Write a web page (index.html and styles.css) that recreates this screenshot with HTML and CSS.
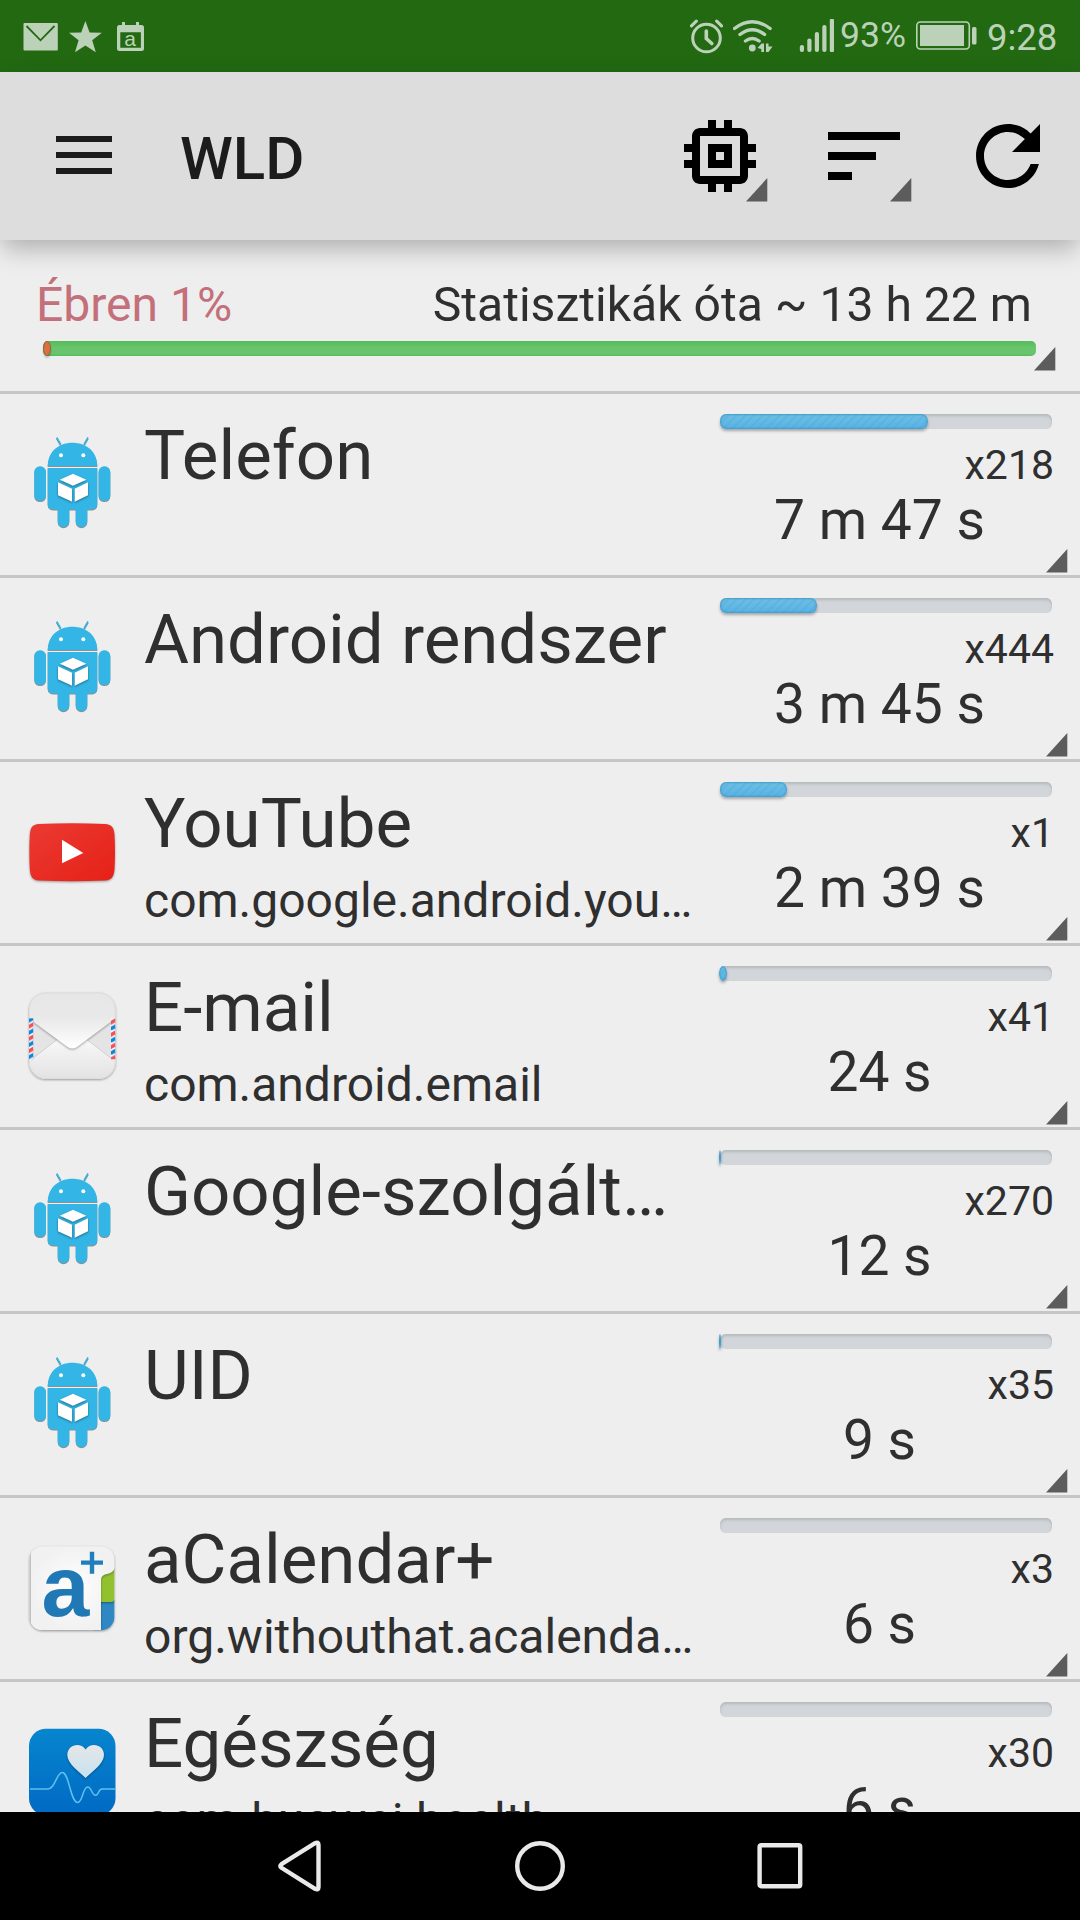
FILE: index.html
```html
<!DOCTYPE html>
<html lang="hu">
<head>
  <meta charset="UTF-8">
  <meta name="viewport" content="width=device-width, initial-scale=1.0">
  <title>WLD</title>
  <link rel="stylesheet" href="styles.css">
</head>
<body>
  <!-- shared shapes -->
  <svg class="defs" width="0" height="0">
    <symbol id="android" viewBox="0 0 96 96">
      <g class="droid">
        <path d="M32.7 1.5l4 7M64 1.5l-4 7" stroke="#33b5e5" stroke-width="1.6"/>
        <path d="M23.7 30C24 15 35 6.7 48.5 6.7S73 15 73.3 30z"/>
        <path d="M23.7 32h49.6v36.5a5 5 0 0 1-5 5h-39.6a5 5 0 0 1-5-5z"/>
        <rect x="10.3" y="30.3" width="11.7" height="34.7" rx="5.5"/>
        <rect x="74.6" y="30.3" width="11.7" height="34.7" rx="5.5"/>
        <path d="M33.7 72h11.6v13.5a5.8 5.8 0 0 1-11.6 0zM51.7 72h11.6v13.5a5.8 5.8 0 0 1-11.6 0z"/>
      </g>
      <circle cx="37" cy="19.3" r="2" fill="#fff"/>
      <circle cx="59.3" cy="19.3" r="2" fill="#fff"/>
      <path class="cube" d="M49 37.7l13.4 6L49 49.7l-13.2-6zM34 46.3l14 6.4v13l-14-6.4zM64 46.3l-13.3 6.4v13L64 59.3z"/>
    </symbol>
    <symbol id="corner" viewBox="0 0 22 24">
      <path d="M0 23.5L21.3 0v23.5z" fill="#5c5c5c"/>
    </symbol>
  </svg>

  <div class="status-bar">
    <svg class="mail" viewBox="23 0 35 72" width="35" height="72">
      <rect x="23.5" y="23" width="34.3" height="27.5" rx="1"/>
      <path d="M26.5 26l14 14.3 14-14.3" fill="none" stroke="#226912" stroke-width="1.8"/>
    </svg>
    <svg class="star" viewBox="69 0 33 72" width="33" height="72">
      <path d="M85.4 21l4.2 11.4 12.2.4-9.6 7.5 3.6 11.9-10.4-6.8L75 52.2l3.6-11.9-9.6-7.5 12.2-.4z"/>
    </svg>
    <svg class="cal" viewBox="117 0 27 72" width="27" height="72">
      <path fill-rule="evenodd" d="M122 22h3v3h11v-3h3v3h2.5a2.5 2.5 0 0 1 2.5 2.5v21a2.5 2.5 0 0 1-2.5 2.5h-22a2.5 2.5 0 0 1-2.5-2.5v-21a2.5 2.5 0 0 1 2.5-2.5h2.5zM120.3 32.2v15.6h20.6V32.2z"/>
      <text x="124.3" y="46" font-size="21" textLength="12.5">a</text>
    </svg>

    <svg class="alarm" viewBox="690 0 33 72" width="33" height="72">
      <g fill="none" stroke="#bcd2b8" stroke-linecap="round">
        <circle cx="706.5" cy="38" r="13.8" stroke-width="3"/>
        <path d="M706.3 31v7.5l5.5 5" stroke-width="3.6"/>
        <path d="M691.5 25.8l4.8-4.6M721.5 25.8l-4.8-4.6" stroke-width="3.2"/>
      </g>
    </svg>
    <svg class="wifi" viewBox="733 0 40 72" width="40" height="72">
      <g fill="none" stroke="#bcd2b8" stroke-width="3.4" stroke-linecap="round">
        <path d="M734.5 28.5q17.8-13.5 35.6 0M740 34.5q12.3-9.5 24.6 0M745.5 41q6.800-5 13.600 0"/>
      </g>
      <circle cx="752.3" cy="48" r="3.4"/>
      <path d="M757.5 48l4-4.5h2.5v8.5h-2.700v-3zM766 43.500h2.500v3h4l-4 5.500H766z"/>
    </svg>
    <svg class="signal" viewBox="799 0 36 72" width="36" height="72">
      <rect x="799.8" y="45" width="4.2" height="7" rx="2"/>
      <rect x="807.3" y="38.5" width="4.2" height="13.5" rx="2"/>
      <rect x="814.8" y="32" width="4.2" height="20" rx="2"/>
      <rect x="822.3" y="25" width="4.2" height="27" rx="2"/>
      <rect x="829.8" y="19" width="4.2" height="33" rx="1"/>
    </svg>
    <span class="percent">93%</span>
    <svg class="battery" viewBox="916 0 61 72" width="61" height="72">
      <rect x="916.8" y="22" width="52.5" height="27" rx="3.5" fill="none" stroke="#bcd2b8" stroke-width="1.6"/>
      <rect x="920" y="25" width="44" height="21"/>
      <rect x="972" y="27" width="4.5" height="17.5" rx="1.5"/>
    </svg>
    <span class="clock">9:28</span>
  </div>

  <header class="app-bar">
    <svg class="menu" viewBox="0 0 56 38" width="56" height="38"><path d="M0 0h56v6H0zM0 16h56v6H0zM0 32h56v6H0z"/></svg>
    <h1>WLD</h1>
    <div class="actions">
      <div class="action">
        <svg viewBox="0 0 24 24"><path d="M15 9H9v6h6V9zm-2 4h-2v-2h2v2zm8-2V9h-2V7c0-1.100-.9-2-2-2h-2V3h-2v2h-2V3H9v2H7c-1.100 0-2 .9-2 2v2H3v2h2v2H3v2h2v2c0 1.100.9 2 2 2h2v2h2v-2h2v2h2v-2h2c1.100 0 2-.9 2-2v-2h2v-2h-2v-2h2zm-4 6H7V7h10v10z"/></svg>
        <svg class="corner"><use href="#corner"/></svg>
      </div>
      <div class="action">
        <svg viewBox="0 0 24 24"><path d="M3 18h6v-2H3v2zM3 6v2h18V6H3zm0 7h12v-2H3v2z"/></svg>
        <svg class="corner"><use href="#corner"/></svg>
      </div>
      <div class="action">
        <svg viewBox="0 0 24 24"><path d="M17.65 6.35C16.2 4.9 14.21 4 12 4c-4.42 0-7.99 3.58-7.99 8s3.57 8 7.99 8c3.73 0 6.84-2.55 7.73-6h-2.08c-.82 2.33-3.04 4-5.65 4-3.31 0-6-2.69-6-6s2.69-6 6-6c1.66 0 3.14.69 4.22 1.78L13 11h7V4l-2.35 2.35z"/></svg>
      </div>
    </div>
  </header>

  <main>
    <section class="summary">
      <div class="summary-text">
        <span class="awake">Ébren 1%</span>
        <span class="since">Statisztikák óta ~ 13 h 22 m</span>
      </div>
      <div class="total"><div class="total-awake" style="width:0.8%"></div></div>
      <svg class="corner"><use href="#corner"/></svg>
    </section>

    <div class="row">
      <svg class="icon"><use href="#android"/></svg>
      <div class="info"><div class="name">Telefon</div></div>
      <div class="usage">
        <div class="bar"><div class="fill" style="width:62.7%"></div></div>
        <div class="count">x218</div>
        <div class="time">7 m 47 s</div>
      </div>
      <svg class="corner"><use href="#corner"/></svg>
    </div>

    <div class="row">
      <svg class="icon"><use href="#android"/></svg>
      <div class="info"><div class="name">Android rendszer</div></div>
      <div class="usage">
        <div class="bar"><div class="fill" style="width:29.3%"></div></div>
        <div class="count">x444</div>
        <div class="time">3 m 45 s</div>
      </div>
      <svg class="corner"><use href="#corner"/></svg>
    </div>

    <div class="row">
      <svg class="icon" viewBox="0 0 96 96">
        <defs><linearGradient id="yt" x2="1" y2="1"><stop stop-color="#ea3a33"/><stop offset="1" stop-color="#e62117"/></linearGradient></defs>
        <path class="lift" fill="url(#yt)" d="M15 20Q48 18.6 81 20C88 20.5 90 24 90.5 31Q91.5 48 90.5 65C90 72 88 76 81 76.5Q48 77.8 15 76.5C8 76 6.3 72 5.8 65Q4.9 48 5.8 31C6.3 24 8 20.5 15 20z"/>
        <path d="M38 35.7L59.3 49 38 59.3z" fill="#fff"/>
      </svg>
      <div class="info"><div class="name">YouTube</div><div class="package">com.google.android.you…</div></div>
      <div class="usage">
        <div class="bar"><div class="fill" style="width:20.3%"></div></div>
        <div class="count">x1</div>
        <div class="time">2 m 39 s</div>
      </div>
      <svg class="corner"><use href="#corner"/></svg>
    </div>

    <div class="row">
      <svg class="icon" viewBox="0 0 96 96">
        <defs>
          <linearGradient id="flap" x2="0" y2="1"><stop stop-color="#e6e6e6"/><stop offset=".5" stop-color="#e9e9e9"/><stop offset="1" stop-color="#fff"/></linearGradient>
          <linearGradient id="pocket" x2="0" y2="1"><stop stop-color="#f8f8f8"/><stop offset="1" stop-color="#e2e2e2"/></linearGradient>
          <clipPath id="envelope"><rect x="5" y="4.5" width="86.5" height="86.5" rx="17"/></clipPath>
          <pattern id="post-l" width="4.5" height="12.2" x="5" y="30" patternUnits="userSpaceOnUse">
            <path fill="#fff" d="M0 0h4.5v12.2H0z"/><path fill="#0c86d8" d="M0 .5l4.5-2.500v4.200L0 4.700zM0 12.700l4.500-2.500v4.200L0 16.900z"/><path fill="#f0525a" d="M0 6.600l4.500-2.500v4.200L0 10.800z"/>
          </pattern>
          <pattern id="post-r" width="4.500" height="12.200" x="87" y="30" patternUnits="userSpaceOnUse">
            <path fill="#fff" d="M0 0h4.500v12.200H0z"/><path fill="#f0525a" d="M0 2.500L4.500 0v4.200L0 6.700z"/><path fill="#0c86d8" d="M0 8.600l4.500-2.500v4.200L0 12.800z"/>
          </pattern>
        </defs>
        <rect class="lift" x="5" y="4.500" width="86.500" height="86.500" rx="17" fill="#e4e4e4"/>
        <g clip-path="url(#envelope)">
          <path d="M5 73l28-22h30l29 22v19H5z" fill="url(#pocket)"/>
          <path d="M9 70l24.500-18.700M87 70L62.500 51.300" stroke="#c4c4c4" stroke-width=".8"/>
          <path class="lift" d="M0 0h96v27L53 59q-4.700 3-9.400 0L0 27z" fill="url(#flap)"/>
        </g>
        <rect x="5.500" y="5" width="85.500" height="85.500" rx="16.500" fill="none" stroke="#dadada" stroke-width=".8"/>
        <rect x="5" y="30.300" width="4.300" height="41" fill="url(#post-l)"/>
        <rect x="87" y="30.300" width="4.300" height="41" fill="url(#post-r)"/>
      </svg>
      <div class="info"><div class="name">E-mail</div><div class="package">com.android.email</div></div>
      <div class="usage">
        <div class="bar"><div class="fill sliver" style="width:2.4%"></div></div>
        <div class="count">x41</div>
        <div class="time">24 s</div>
      </div>
      <svg class="corner"><use href="#corner"/></svg>
    </div>

    <div class="row">
      <svg class="icon"><use href="#android"/></svg>
      <div class="info"><div class="name">Google-szolgált…</div></div>
      <div class="usage">
        <div class="bar"><div class="fill sliver" style="width:0.6%"></div></div>
        <div class="count">x270</div>
        <div class="time">12 s</div>
      </div>
      <svg class="corner"><use href="#corner"/></svg>
    </div>

    <div class="row">
      <svg class="icon"><use href="#android"/></svg>
      <div class="info"><div class="name">UID</div></div>
      <div class="usage">
        <div class="bar"><div class="fill sliver" style="width:0.5%"></div></div>
        <div class="count">x35</div>
        <div class="time">9 s</div>
      </div>
      <svg class="corner"><use href="#corner"/></svg>
    </div>

    <div class="row">
      <svg class="icon" viewBox="0 0 96 96">
        <defs>
          <radialGradient id="page"><stop stop-color="#fff"/><stop offset="1" stop-color="#f1f1f1"/></radialGradient>
          <clipPath id="tile"><rect x="5.5" y="6.3" width="84.8" height="84" rx="13"/></clipPath>
        </defs>
        <rect class="lift" x="5.5" y="6.3" width="84.8" height="84" rx="13" fill="#ddd"/>
        <g clip-path="url(#tile)">
          <path d="M70 60h22v32H70z" fill="#2f88c4"/>
          <path class="lift" d="M70 28h22v28q-1 6-5 6H70z" fill="#92c130"/>
          <path class="lift" d="M7 6h84v22q-2 5-8 6-6 1-6 6v50H7z" fill="url(#page)"/>
        </g>
        <text class="cal-a" x="17.5" y="75.5">a</text>
        <path d="M65.8 11.7h4.4v8.8H79v4.3h-8.800v8.900h-4.400v-8.900H57v-4.300h8.800z" fill="#1f7fbd"/>
      </svg>
      <div class="info"><div class="name">aCalendar+</div><div class="package">org.withouthat.acalenda…</div></div>
      <div class="usage">
        <div class="bar"></div>
        <div class="count">x3</div>
        <div class="time">6 s</div>
      </div>
      <svg class="corner"><use href="#corner"/></svg>
    </div>

    <div class="row">
      <svg class="icon" viewBox="0 0 96 96">
        <defs>
          <linearGradient id="blue" x2="0" y2="1"><stop stop-color="#0785ce"/><stop offset="1" stop-color="#006ac4"/></linearGradient>
          <linearGradient id="heart" x2="0" y2="1"><stop stop-color="#e6e6e8"/><stop offset="1" stop-color="#c5e2f0"/></linearGradient>
        </defs>
        <rect x="5" y="4.7" width="86.5" height="86.5" rx="17" fill="url(#blue)"/>
        <path d="M6 65h17c9 0 9-16.5 15.3-16.5 7 0 8 30 15.4 30 5 0 5-15.5 10-15.5 4 0 4 8.3 7.7 8.3S74 65 78 65h13" fill="none" stroke="#5fc0ee" stroke-width="1.5"/>
        <path class="lift" d="M61.6 54C56 48 43.3 40 43.3 31c0-10.5 13-13.5 18.3-5.5 5.3-8 18.4-5 18.4 5.5 0 9-12.8 17-18.4 23z" fill="url(#heart)"/>
      </svg>
      <div class="info"><div class="name">Egészség</div><div class="package">com.huawei.health</div></div>
      <div class="usage">
        <div class="bar"></div>
        <div class="count">x30</div>
        <div class="time">6 s</div>
      </div>
    </div>
  </main>

  <nav class="nav-bar">
    <svg viewBox="0 0 52 52"><path d="M7.5 24.2L41 3.2q3.5-1.7 3.5 1.5v42.6q0 3.2-3.5 1.5L7.5 27.8q-2.4-1.8 0-3.6z"/></svg>
    <svg viewBox="0 0 52 52"><circle cx="26" cy="26" r="22.8"/></svg>
    <svg viewBox="0 0 52 52"><rect x="5.6" y="5.2" width="40.6" height="41" rx="1.5"/></svg>
  </nav>
</body>
</html>
```
FILE: styles.css
```css
* {
  box-sizing: border-box;
}
body {
  margin: 0;
  width: 1080px;
  height: 1920px;
  overflow: hidden;
  display: flex;
  flex-direction: column;
  font-family: Roboto, sans-serif;
  background: #eee;
  color: #2f2f2f;
}
svg {
  display: block;
  flex: none;
}
.defs {
  position: absolute;
}

/* status bar */
.status-bar {
  flex: none;
  height: 72px;
  padding-left: 23px;
  display: flex;
  background: #226912;
  color: #bcd2b8;
  fill: #bcd2b8;
}
.star {
  margin-left: 11px;
}
.cal {
  margin-left: 15px;
}
.cal text {
  font-family: "Liberation Sans", sans-serif;
}
.alarm {
  margin-left: 546px;
}
.wifi {
  margin-left: 10px;
}
.signal {
  margin-left: 26px;
}
.percent {
  width: 76px;
  padding-left: 5px;
  font-size: 35.5px;
  line-height: 70px;
}
.battery {
  margin-left: 5px;
}
.clock {
  margin-left: 10px;
  font-size: 36.5px;
  line-height: 75px;
}

/* app bar */
.app-bar {
  position: relative;
  z-index: 1;
  flex: none;
  height: 168px;
  padding: 0 24px 0 56px;
  display: flex;
  align-items: center;
  background: #ddd;
  box-shadow: 0 10px 24px -2px rgba(0,0,0,0.28);
}
.menu {
  margin-bottom: 2px;
  fill: #1c1c1c;
}
.app-bar h1 {
  margin: 4px 0 0 68px;
  font-size: 60px;
  font-weight: 500;
  color: #1c1c1c;
}
.actions {
  margin-left: auto;
  display: flex;
  gap: 48px;
}
.action {
  position: relative;
  width: 96px;
  height: 96px;
}
.corner {
  position: absolute;
  width: 22px;
  height: 24px;
}
.action .corner {
  right: 0;
  bottom: 2px;
}

/* totals */
main {
  height: 1572px;
  overflow: hidden;
}
.summary {
  position: relative;
  height: 154px;
  padding: 37px 44px 0 43px;
  border-bottom: 3px solid #c6c6c6;
}
.summary-text {
  display: flex;
  justify-content: space-between;
  margin: 0 4px 0 -7px;
  font-size: 48px;
  line-height: 56px;
}
.since {
  font-size: 48.1px;
}
.awake {
  color: #c3707a;
}
.total {
  height: 15px;
  margin-top: 8px;
  border-radius: 5px;
  background: linear-gradient(#56bb59, #68c56d 45%, #68c56d 85%, #56bb59);
}
.total-awake {
  height: 15px;
  border-radius: 50%;
  background: #d8703f;
  border: 1px solid #9c6440;
  box-shadow: 0 2px 2px rgba(0,0,0,0.2);
}
.summary .corner {
  right: 24px;
  top: 107px;
}

/* app rows */
.row {
  position: relative;
  height: 184px;
  padding-left: 24px;
  display: flex;
  border-bottom: 3px solid #c6c6c6;
}
.row .corner {
  right: 12px;
  bottom: 2px;
}
.icon {
  width: 96px;
  height: 96px;
  margin-top: 42px;
}
.info {
  width: 562px;
  margin-left: 24px;
  padding-top: 21px;
}
.name,
.package {
  white-space: nowrap;
}
.name {
  font-size: 69px;
  line-height: 81px;
}
.package {
  font-size: 48px;
  line-height: 73px;
}
.usage {
  width: 348px;
  padding-top: 20px;
}
.bar {
  height: 15px;
  margin: 0 2px 0 14px;
  border-radius: 6px;
  background: #d2d6da;
  box-shadow: inset 0 2px 3px #b4b9bc;
}
.fill {
  height: 15px;
  border-radius: 6px / 7px;
  background: repeating-linear-gradient(135deg, rgba(60,165,235,0.25) 0 2px, transparent 2px 6px), linear-gradient(#72bfe0, #58b2e4);
  box-shadow: inset 0 0 2px 1px #3f9dcb, 0 2px 3px rgba(0,0,0,0.3);
}
.sliver {
  margin-left: -1px;
  border-radius: 50%;
}
.count {
  margin-top: 10px;
  font-size: 41px;
  line-height: 52px;
  text-align: right;
}
.time {
  padding-right: 1px;
  font-size: 55.2px;
  line-height: 58px;
  text-align: center;
}

/* icon details */
.droid {
  fill: #33b5e5;
  filter: drop-shadow(0.5px 1px 0.5px rgba(0,0,0,0.4));
}
.cube {
  fill: #fff;
  filter: drop-shadow(0 1px 1px rgba(0,0,0,0.4));
}
.lift {
  filter: drop-shadow(0 1px 1px rgba(0,0,0,0.35));
}
.cal-a {
  font-family: "Liberation Sans", sans-serif;
  font-weight: bold;
  font-size: 86px;
  fill: #2079b4;
}

/* navigation */
.nav-bar {
  flex: none;
  height: 108px;
  padding: 0 274px;
  display: flex;
  justify-content: space-between;
  align-items: center;
  background: #000;
}
.nav-bar svg {
  width: 52px;
  height: 52px;
  fill: none;
  stroke: #e9e9e9;
  stroke-width: 4.4;
}
```
